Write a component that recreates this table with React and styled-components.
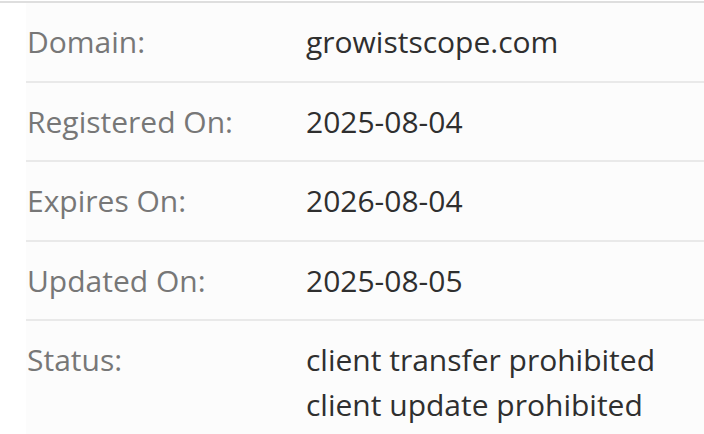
import styled, { createGlobalStyle } from 'styled-components'

const GlobalStyle = createGlobalStyle`
  body {
    margin: 0;
    background: #ffffff;
    font-family: 'Open Sans', 'Noto Sans', sans-serif;
  }
`

const Panel = styled.div`
  width: 704px;
  height: 434px;
  overflow: hidden;
  border-top: 2px solid #dedede;
  margin-top: 1px;
  padding-left: 26px;
  box-sizing: border-box;
`

const Table = styled.div`
  background: #fcfcfc;
  display: flex;
  flex-direction: column;
`

const Row = styled.div`
  display: grid;
  grid-template-columns: 280px 1fr;
  padding: 16px 0 16.5px;
  border-bottom: ${p => (p.last ? 'none' : '2px solid #e9e9e9')};
  font-size: 30px;
  line-height: 45px;
`

const Label = styled.div`
  color: #777777;
  padding-left: 1px;
`

const Value = styled.div`
  color: #2f2f2f;
  display: flex;
  flex-direction: column;
`

const rows = [
  { label: 'Domain:', value: ['growistscope.com'] },
  { label: 'Registered On:', value: ['2025-08-04'] },
  { label: 'Expires On:', value: ['2026-08-04'] },
  { label: 'Updated On:', value: ['2025-08-05'] },
  {
    label: 'Status:',
    value: ['client transfer prohibited', 'client update prohibited'],
  },
]

const App = () => {
  return (
    <>
      <GlobalStyle />
      <Panel>
        <Table>
          {rows.map((r, i) => (
            <Row key={r.label} last={i === rows.length - 1}>
              <Label>{r.label}</Label>
              <Value>
                {r.value.map(v => (
                  <span key={v}>{v}</span>
                ))}
              </Value>
            </Row>
          ))}
        </Table>
      </Panel>
    </>
  )
}

export default App
